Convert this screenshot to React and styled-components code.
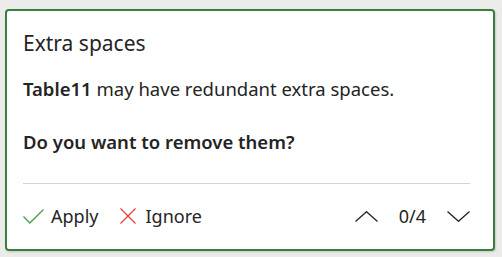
import React from 'react';
import styled, {createGlobalStyle} from 'styled-components';

const Global = createGlobalStyle`
  html, body { margin: 0; padding: 0; background: #ebebea; }
  body { font-family: "Noto Sans", "Open Sans", sans-serif; color: #242424; }
`;

const Page = styled.div`
  width: 502px;
  height: 257px;
  box-sizing: border-box;
  padding: 9px 7px 6px 5px;
`;

const Card = styled.div`
  height: 100%;
  box-sizing: border-box;
  background: #fff;
  border: 2px solid #3b7d3f;
  border-radius: 4px;
  box-shadow: 1px 1px 2px rgba(0, 0, 0, 0.15);
  padding: 18px 23px 0 16px;
  display: flex;
  flex-direction: column;
`;

const Title = styled.div`
  font-size: 21px;
  line-height: 28px;
  margin-bottom: 19px;
`;

const Strong = styled.b`
  font-weight: 600;
`;

const Text = styled.div`
  font-size: 18.5px;
  line-height: 26px;
  font-weight: ${p => (p.bold ? 600 : 400)};
  margin-bottom: ${p => p.gap || 0}px;
`;

const Divider = styled.div`
  height: 1px;
  background: #d4d4d4;
  margin-top: 28px;
`;

const Actions = styled.div`
  display: flex;
  align-items: center;
  height: 66px;
`;

const Action = styled.button`
  all: unset;
  display: flex;
  align-items: center;
  gap: ${p => p.gap}px;
  font-size: 18px;
  line-height: 24px;
  margin-right: 22px;
  cursor: pointer;
`;

const Pager = styled.div`
  margin-left: auto;
  display: flex;
  align-items: center;
  gap: 21px;
  font-size: 18px;
  line-height: 24px;
`;

const Chevron = ({down}) => (
  <svg width="23" height="11" viewBox="0 0 23 11" fill="none" stroke="#242424" strokeWidth="1.3">
    {down ? <path d="M0.5 0.5 L11.5 10.3 L22.5 0.5" /> : <path d="M0.5 10.5 L11.5 0.7 L22.5 10.5" />}
  </svg>
);

export default function App() {
  return (
    <Page>
      <Global />
      <Card>
        <Title>Extra spaces</Title>
        <Text gap={27}><Strong>Table11</Strong> may have redundant extra spaces.</Text>
        <Text bold>Do you want to remove them?</Text>
        <Divider />
        <Actions>
          <Action gap={7}>
            <svg width="21" height="15" viewBox="0 0 21 15" fill="none" stroke="#4a9e4e" strokeWidth="1.3">
              <path d="M0.5 7.5 L6.8 14 L20.5 0.5" />
            </svg>
            Apply
          </Action>
          <Action gap={9}>
            <svg width="16" height="16" viewBox="0 0 16 16" fill="none" stroke="#e0403f" strokeWidth="1.3">
              <path d="M0.5 0.5 L15.5 15.5 M15.5 0.5 L0.5 15.5" />
            </svg>
            Ignore
          </Action>
          <Pager>
            <Chevron />
            <span>0/4</span>
            <Chevron down />
          </Pager>
        </Actions>
      </Card>
    </Page>
  );
}
